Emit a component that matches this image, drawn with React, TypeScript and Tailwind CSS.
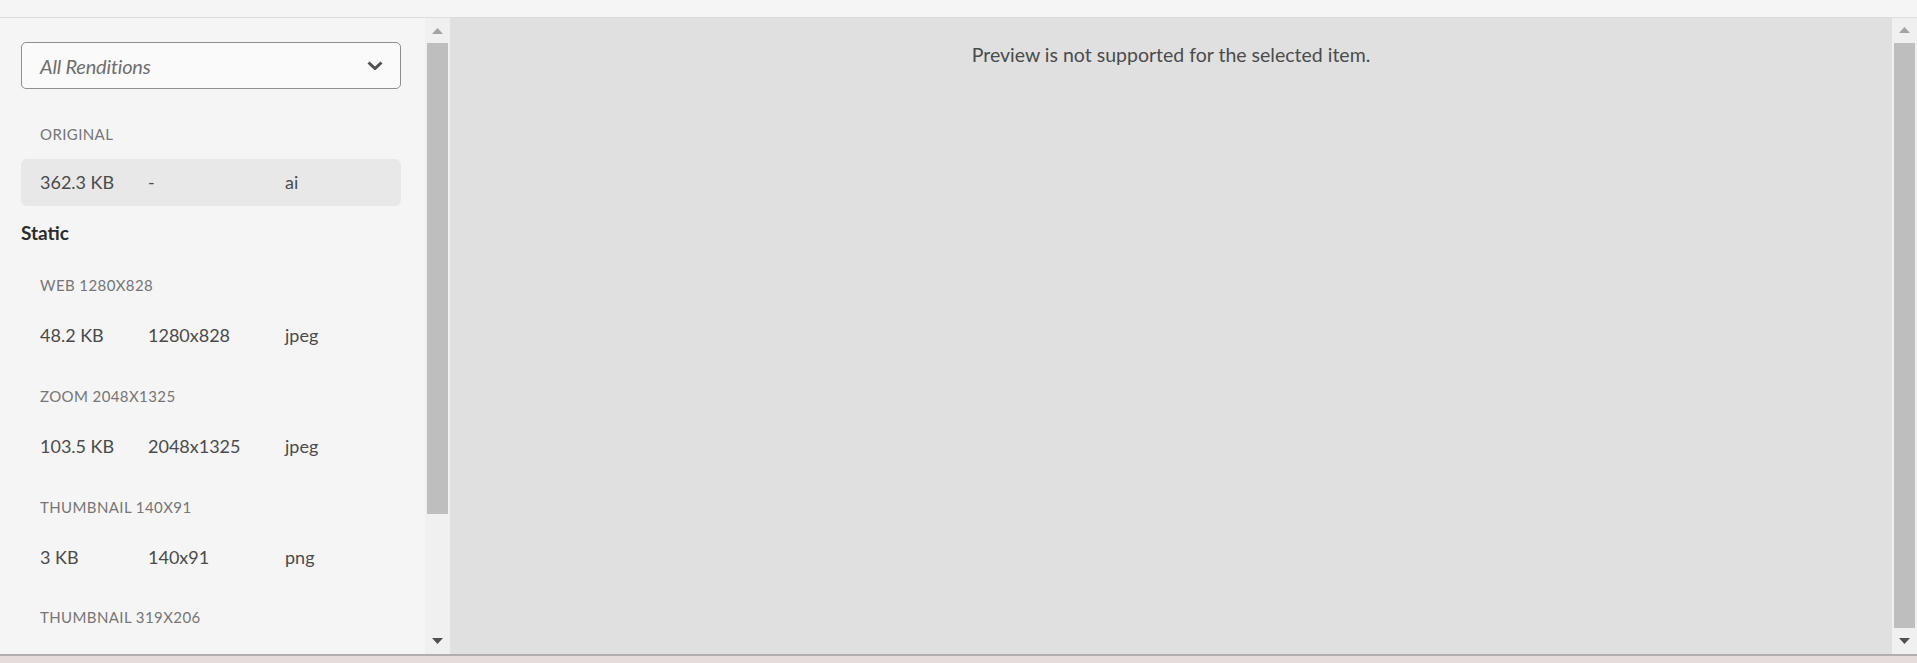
import React from "react";

const font = { fontFamily: "Lato, 'Open Sans', sans-serif" };

function Row({ size, dim, fmt, highlight }: { size: string; dim: string; fmt: string; highlight?: boolean }) {
  return (
    <div
      className={`flex h-[47px] items-center rounded-[6px] pl-[19px] text-[18px] text-[#4b4b4b] ${highlight ? "bg-[#e8e8e8]" : ""}`}
    >
      <div className="w-[108px]">{size}</div>
      <div className="w-[137px]">{dim}</div>
      <div>{fmt}</div>
    </div>
  );
}

function Label({ text, mt }: { text: string; mt: string }) {
  return (
    <div className={`${mt} h-[24px] pl-[19px] text-[15px] leading-[24px] tracking-[0.4px] text-[#767676]`}>{text}</div>
  );
}

function ScrollBar({ thumbH }: { thumbH: string }) {
  return (
    <div className="flex h-full w-[25px] shrink-0 flex-col items-center bg-[#f0f0f0]">
      <div className="flex h-[25px] w-full items-center justify-center">
        <svg width="11" height="6" viewBox="0 0 11 6">
          <polygon points="0,6 11,6 5.5,0" fill="#a3a3a3" />
        </svg>
      </div>
      <div className={`w-[21px] ${thumbH} bg-[#bebebe]`} />
      <div className="flex-1" />
      <div className="flex h-[26px] w-full items-center justify-center">
        <svg width="11" height="6" viewBox="0 0 11 6">
          <polygon points="0,0 11,0 5.5,6" fill="#505050" />
        </svg>
      </div>
    </div>
  );
}

export default function App() {
  return (
    <div className="flex h-[663px] w-[1917px] flex-col overflow-hidden bg-[#f5f5f5]" style={font}>
      <div className="h-[18px] shrink-0 border-b border-[#dedede] bg-[#f5f5f5]" />
      <div className="flex h-[636px] shrink-0">
        <div className="w-[425px] shrink-0 overflow-hidden bg-[#f5f5f5] pl-[21px] pr-[24px] pt-[24px]">
          <div className="flex h-[47px] items-center justify-between rounded-[5px] border border-[#8f8f8f] bg-[#fafafa] pl-[18px] pr-[17px]">
            <span className="text-[20px] italic tracking-[-0.2px] text-[#6e6e6e]">All Renditions</span>
            <svg width="16" height="9" viewBox="0 0 16 9">
              <polyline points="1.5,1.5 8,7.5 14.5,1.5" fill="none" stroke="#505050" strokeWidth="3" />
            </svg>
          </div>
          <Label text="ORIGINAL" mt="mt-[33px]" />
          <div className="mt-[13px]">
            <Row size="362.3 KB" dim="-" fmt="ai" highlight />
          </div>
          <div className="mt-[14px] h-[26px] text-[19px] font-bold leading-[26px] text-[#2c2c2c]">Static</div>
          <Label text="WEB 1280X828" mt="mt-[27px]" />
          <div className="mt-[15px]">
            <Row size="48.2 KB" dim="1280x828" fmt="jpeg" />
          </div>
          <Label text="ZOOM 2048X1325" mt="mt-[25px]" />
          <div className="mt-[15px]">
            <Row size="103.5 KB" dim="2048x1325" fmt="jpeg" />
          </div>
          <Label text="THUMBNAIL 140X91" mt="mt-[25px]" />
          <div className="mt-[15px]">
            <Row size="3 KB" dim="140x91" fmt="png" />
          </div>
          <Label text="THUMBNAIL 319X206" mt="mt-[24px]" />
        </div>
        <ScrollBar thumbH="h-[471px]" />
        <div className="flex flex-1 justify-center bg-[#e0e0e0] pt-[25px]">
          <div className="h-[24px] text-[19.5px] leading-[24px] text-[#4b4b4b]">Preview is not supported for the selected item.</div>
        </div>
        <ScrollBar thumbH="h-[586px]" />
      </div>
      <div className="h-[2px] shrink-0 bg-[#b3aeae]" />
      <div className="flex-1 bg-[#e6dcdc]" />
    </div>
  );
}
